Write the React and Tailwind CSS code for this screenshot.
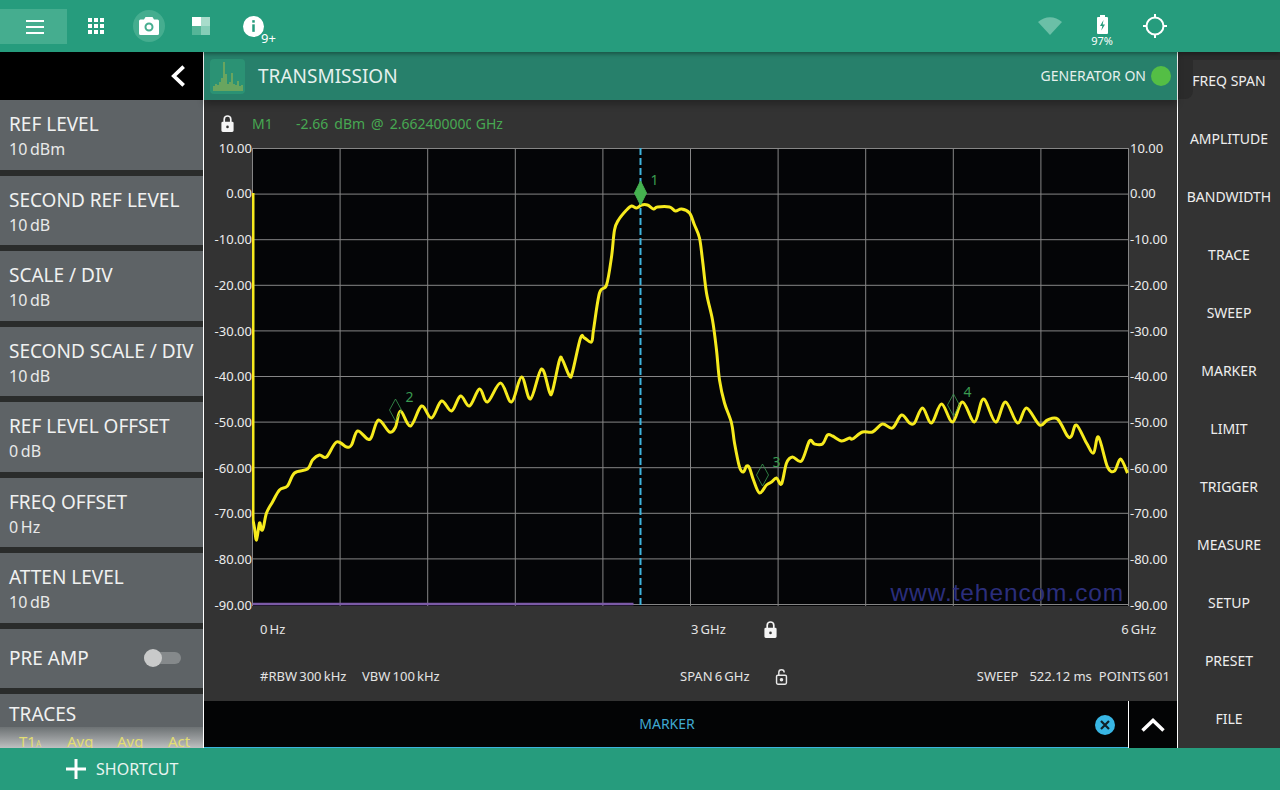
const levels = ["10.00", "0.00", "-10.00", "-20.00", "-30.00", "-40.00", "-50.00", "-60.00", "-70.00", "-80.00", "-90.00"];

const leftItems = [
  ["REF LEVEL", "10\u2009dBm"],
  ["SECOND REF LEVEL", "10\u2009dB"],
  ["SCALE / DIV", "10\u2009dB"],
  ["SECOND SCALE / DIV", "10\u2009dB"],
  ["REF LEVEL OFFSET", "0\u2009dB"],
  ["FREQ OFFSET", "0\u2009Hz"],
  ["ATTEN LEVEL", "10\u2009dB"],
];

const rightItems = ["FREQ SPAN", "AMPLITUDE", "BANDWIDTH", "TRACE", "SWEEP", "MARKER", "LIMIT", "TRIGGER", "MEASURE", "SETUP", "PRESET", "FILE"];

// trace read off the picture, in page pixels
const trace = [
  [253.5, 520], [255, 528], [257, 540], [260, 523], [262, 530], [264, 527], [267, 513], [273, 502], [280, 490], [288, 486], [295, 473],
  [308, 469], [313, 460], [320, 455], [327, 457], [337, 442], [347, 447], [352, 445], [358, 431], [368, 439], [372, 437], [379, 420], [390, 432],
  [396, 427], [401, 411], [411, 426], [422, 406], [432, 418], [442, 401], [452, 411], [461, 396], [470, 406], [480, 389], [488, 402], [501, 383],
  [512, 402], [522, 377], [531, 399], [542, 369], [550, 392], [553, 391], [560, 360], [563, 360], [570, 376], [573, 372], [581, 338], [585, 338],
  [592, 342], [594, 330], [600, 293], [607, 285], [612, 257], [615, 230], [619, 220], [627, 210], [632, 206], [637, 208], [642, 205], [648, 205],
  [654, 209], [658, 207], [670, 207], [676, 211], [682, 209], [690, 213], [695, 225], [700, 238], [703, 260], [707, 293], [713, 320], [717, 350],
  [720, 380], [725, 403], [732, 423], [735, 443], [740, 467], [744, 472], [747, 466], [750, 468], [754, 480], [760, 493], [767, 485], [772, 482],
  [777, 478], [782, 484], [787, 463], [793, 457], [802, 461], [810, 441], [815, 444], [823, 444], [828, 435], [833, 436], [842, 441], [850, 438],
  [853, 439], [863, 432], [873, 432], [883, 424], [893, 428], [902, 415], [910, 423], [915, 423], [923, 408], [932, 423], [942, 404], [953, 422],
  [963, 402], [975, 422], [984, 399], [996, 422], [1006, 402], [1018, 423], [1027, 408], [1040, 425], [1048, 420], [1058, 419], [1068, 436],
  [1072, 436], [1077, 425], [1087, 443], [1094, 453], [1099, 437], [1108, 467], [1115, 471], [1121, 459], [1128, 473],
];

// catmull-rom through the points so the ripple has round tops
function tracePath(pts) {
  let d = `M253.5 193L${pts[0][0]} ${pts[0][1]}`;
  for (let i = 0; i < pts.length - 1; i++) {
    const p0 = pts[i - 1] || pts[i];
    const p1 = pts[i];
    const p2 = pts[i + 1];
    const p3 = pts[i + 2] || p2;
    const c1x = p1[0] + (p2[0] - p0[0]) / 6;
    const c1y = p1[1] + (p2[1] - p0[1]) / 6;
    const c2x = p2[0] - (p3[0] - p1[0]) / 6;
    const c2y = p2[1] - (p3[1] - p1[1]) / 6;
    d += `C${c1x} ${c1y} ${c2x} ${c2y} ${p2[0]} ${p2[1]}`;
  }
  return d;
}

const markers = [
  { n: "1", x: 641, y: 193, h: 12, solid: true, lx: 655, ly: 185 },
  { n: "2", x: 396, y: 410, h: 11, lx: 410, ly: 402 },
  { n: "3", x: 763, y: 475, h: 11, lx: 777, ly: 467 },
  { n: "4", x: 954, y: 405, h: 11, lx: 968, ly: 397 },
];

function Lock({ open, className }) {
  if (open) {
    return (
      <svg viewBox="0 0 16 20" className={className} fill="none" stroke="#e8e8e8" strokeWidth="1.6">
        <path d="M5 8V5a3 3 0 0 1 6 0" />
        <rect x="2.5" y="8" width="11" height="10" rx="1.5" />
        <circle cx="8" cy="13" r="1.2" fill="#e8e8e8" />
      </svg>
    );
  }
  return (
    <svg viewBox="0 0 16 20" className={className}>
      <path d="M4.5 9V5.5a3.5 3.5 0 0 1 7 0V9" fill="none" stroke="#f5f5f5" strokeWidth="1.8" />
      <path fillRule="evenodd" fill="#f5f5f5" d="M3 8h10a1.5 1.5 0 0 1 1.5 1.5v8A1.5 1.5 0 0 1 13 19H3a1.5 1.5 0 0 1-1.5-1.5v-8A1.5 1.5 0 0 1 3 8Zm5 4.2a1.4 1.4 0 1 0 0 2.8 1.4 1.4 0 0 0 0-2.8Z" />
    </svg>
  );
}

function TopBar() {
  return (
    <div className="h-[52px] shrink-0 bg-[#269c7d] flex items-center relative z-20 shadow-[0_2px_4px_rgba(0,0,0,0.35)]">
      <div className="mt-px w-[67px] h-[35px] bg-[#45ad8f] flex items-center justify-center pl-[2px]">
        <div className="w-[18px] flex flex-col gap-[4px]">
          <div className="h-[2px] bg-white" />
          <div className="h-[2px] bg-white" />
          <div className="h-[2px] bg-white" />
        </div>
      </div>
      <div className="ml-[21px] grid grid-cols-3 gap-[2px] w-[16px]">
        {Array.from({ length: 9 }).map((_, i) => (
          <div key={i} className="w-[4px] h-[4px] bg-white" />
        ))}
      </div>
      <div className="ml-[29px] w-[32px] h-[32px] rounded-full bg-[#45ad8f] flex items-center justify-center">
        <svg viewBox="0 0 20 18" className="w-[20px] h-[18px]">
          <path fillRule="evenodd" fill="#fff" d="M6.5 0h7L15 2.500h3.500A1.500 1.500 0 0 1 20 4v12.500a1.500 1.500 0 0 1-1.500 1.500h-17A1.500 1.500 0 0 1 0 16.500V4a1.500 1.500 0 0 1 1.500-1.500H5ZM10 5.500a4.500 4.500 0 1 0 0 9 4.500 4.500 0 0 0 0-9Zm0 2a2.500 2.500 0 1 1 0 5 2.500 2.500 0 0 1 0-5Z" />
        </svg>
      </div>
      <svg viewBox="0 0 18 18" className="ml-[27px] w-[18px] h-[18px]">
        <rect x="0" y="0" width="9" height="9" fill="#fff" />
        <rect x="9" y="0" width="9" height="9" fill="#a8dccb" />
        <rect x="0" y="9" width="9" height="9" fill="#55b598" />
        <rect x="9" y="9" width="9" height="9" fill="#85cdb7" />
      </svg>
      <div className="ml-[33px] relative w-[21px] h-[21px] rounded-full bg-white flex items-center justify-center">
        <svg viewBox="0 0 6 14" className="w-[5px] h-[12px]" fill="#269c7d">
          <rect x="1.500" y="0" width="3" height="3" />
          <rect x="1.500" y="5" width="3" height="9" />
        </svg>
        <span className="absolute left-[18px] top-[14px] text-[13px] leading-[16px] text-white">9+</span>
      </div>
      <div className="ml-auto w-[24px] h-[18px]">
        <svg viewBox="0 0 24 18" className="w-[24px] h-[18px]">
          <path d="M0 5C7-1.500 17-1.500 24 5L12 18Z" fill="#6bbfa7" />
        </svg>
      </div>
      <div className="ml-[25px] w-[30px] flex flex-col items-center relative top-[5px]">
        <svg viewBox="0 0 11 19" className="w-[11px] h-[19px]">
          <path fillRule="evenodd" fill="#fff" d="M3 0h5v2h2a1 1 0 0 1 1 1v15a1 1 0 0 1-1 1H1a1 1 0 0 1-1-1V3a1 1 0 0 1 1-1h2Zm3.500 5L3 11h2.300l-1 4.500L8 9.500H5.700Z" />
        </svg>
        <span className="mt-px text-[11px] leading-[12px] text-white">97%</span>
      </div>
      <svg viewBox="0 0 24 24" className="ml-[26px] mr-[113px] w-[24px] h-[24px]" fill="none" stroke="#fff" strokeWidth="2">
        <circle cx="12" cy="12" r="8.500" />
        <path d="M12 0v4M12 20v4M0 12h4M20 12h4" />
      </svg>
    </div>
  );
}

function LeftPanel() {
  return (
    <div className="w-[203px] shrink-0 flex flex-col bg-[#2a2c2b] overflow-hidden">
      <div className="h-[48px] shrink-0 bg-black flex items-center justify-end pr-[17px]">
        <svg viewBox="0 0 16 24" className="w-[15px] h-[24px]" fill="none" stroke="#fff" strokeWidth="4">
          <path d="M13.500 2L3 12l10.500 10" />
        </svg>
      </div>
      <div className="flex flex-col gap-[6px]">
        {leftItems.map(([title, value]) => (
          <div key={title} className="h-[69.5px] shrink-0 bg-[#5e6366] pl-[9px] pt-[12px] text-[#f0f1f1] whitespace-nowrap">
            <div className="text-[19px] leading-[24px]">{title}</div>
            <div className="text-[16px] leading-[26px] text-[#e8e9e9]">{value}</div>
          </div>
        ))}
        <div className="h-[59px] shrink-0 bg-[#5e6366] pl-[9px] pr-[22px] flex items-center justify-between text-[#f0f1f1]">
          <div className="text-[19px]">PRE AMP</div>
          <div className="relative w-[37px] h-[12px] rounded-full bg-[#85898b]">
            <div className="absolute left-0 -top-[3px] w-[18px] h-[18px] rounded-full bg-[#c9caca]" />
          </div>
        </div>
        <div className="h-[60px] shrink-0 bg-[#5e6366] text-[#f0f1f1]">
          <div className="pl-[9px] pt-[8px] h-[33px] text-[19px] leading-[25px]">TRACES</div>
          <div className="h-[30px] bg-gradient-to-b from-[#6d7274] via-[#a5a8a9] to-[#e5e6e6] flex pl-[19px] pt-[3px] text-[15px] text-[#e2dd73]">
            <span className="w-[48px]">T1<span className="text-[8px]">A</span></span>
            <span className="w-[50px]">Avg</span>
            <span className="w-[51px]">Avg</span>
            <span>Act</span>
          </div>
        </div>
      </div>
    </div>
  );
}

function Chart() {
  const xs = Array.from({ length: 11 }).map((_, i) => 253 + i * 87.6);
  const ys = Array.from({ length: 11 }).map((_, i) => 148.5 + i * 45.6);
  return (
    <svg viewBox="252.500 148 877 458" className="w-[877px] h-[458px] shrink-0 bg-[#040507]">
      {xs.map((x) => (
        <line key={x} x1={x} x2={x} y1="148" y2="606" stroke="#868686" strokeWidth="1" />
      ))}
      {ys.map((y) => (
        <line key={y} x1="253" x2="1129" y1={y} y2={y} stroke="#868686" strokeWidth="1" />
      ))}
      <line x1="253" x2="634" y1="604" y2="604" stroke="#7b5aa6" strokeWidth="2.500" />
      <text x="891" y="601" fontFamily="Liberation Sans, sans-serif" fontSize="24.500" fill="#2b2e7c" letterSpacing="0.900">www.tehencom.com</text>
      <line x1="641" x2="641" y1="148" y2="606" stroke="#3fb4dd" strokeWidth="2" strokeDasharray="7 3" />
      <path d={tracePath(trace)} fill="none" stroke="#f6ea1d" strokeWidth="3" strokeLinejoin="round" />
      {markers.map((m) => (
        <g key={m.n}>
          <path
            d={`M${m.x} ${m.y - m.h}L${m.x + 6} ${m.y}L${m.x} ${m.y + m.h}L${m.x - 6} ${m.y}Z`}
            fill={m.solid ? "#45b24f" : "none"}
            stroke={m.solid ? "#45b24f" : "#3a9a50"}
            strokeWidth={m.solid ? 1 : 0.8}
          />
          <text x={m.lx} y={m.ly} fontFamily="Noto Sans, sans-serif" fontSize="14" fill="#3a9a50" textAnchor="middle">{m.n}</text>
        </g>
      ))}
    </svg>
  );
}

function LevelScale({ align }) {
  return (
    <div className={`h-[457px] mt-[0.5px] flex flex-col justify-between text-[13px] text-[#ececec] ${align}`}>
      {levels.map((l, i) => (
        <div key={i} className="h-0 flex items-center">{l}</div>
      ))}
    </div>
  );
}

function Center() {
  return (
    <div className="flex-1 min-w-0 bg-[#333333] flex flex-col border-x border-white">
      <div className="h-[48px] shrink-0 bg-[#27806b] flex items-center pl-[6px] pr-[6px] relative z-10 shadow-[0_5px_6px_rgba(0,0,0,0.25)]">
        <div className="w-[35px] h-[35px] rounded-[4px] bg-[#2b9274] overflow-hidden">
          <svg viewBox="0 0 35 35" className="w-[35px] h-[35px]" stroke="#a8b84a" strokeWidth="1">
            <path d="M4 32v-5M6 32v-7M8 32v-6M10 32v-9M12 32v-13M14 32V3M16 32V15M18 32v-7M20 32v-9M22 32V14M24 32v-7M26 32v-6M28 32v-10M30 32v-5M32 32v-6" />
          </svg>
        </div>
        <div className="ml-[13px] mt-[1px] text-[19px] text-[#e6f0ed]">TRANSMISSION</div>
        <div className="ml-auto -mt-[1px] text-[14px] text-[#e6f0ed]">GENERATOR ON</div>
        <div className="ml-[5px] w-[20px] h-[20px] rounded-full bg-[#54be45]" />
      </div>
      <div className="h-[48px] shrink-0 flex items-center pl-[16px] pb-[1px] text-[14px] text-[#47a852]">
        <Lock className="w-[15px] h-[19px]" />
        <span className="ml-[17px] w-[44px]">M1</span>
        <span>-2.66</span>
        <span className="ml-[6px]">dBm</span>
        <span className="ml-[6px]">@</span>
        <span className="ml-[6px] w-[81px] overflow-hidden whitespace-nowrap">2.662400000</span>
        <span className="ml-[5px]">GHz</span>
      </div>
      <div className="flex shrink-0 h-[458px]">
        <div className="w-[48px] shrink-0 flex justify-end">
          <LevelScale align="items-end" />
        </div>
        <Chart />
        <div className="flex-1 pl-[1px]">
          <LevelScale align="items-start" />
        </div>
      </div>
      <div className="h-[47px] shrink-0 flex items-center pl-[56px] pr-[21px] text-[13px] text-[#e4e4e4]">
        <span className="w-[431px]">0{"\u2009"}Hz</span>
        <span className="w-[72px]">3{"\u2009"}GHz</span>
        <Lock className="w-[15px] h-[19px]" />
        <span className="ml-auto">6{"\u2009"}GHz</span>
      </div>
      <div className="h-[48px] shrink-0 flex items-center pl-[56px] pr-[7px] pb-[1px] text-[13px] text-[#e4e4e4]">
        <span className="w-[102px]">#RBW{"\u2009"}300{"\u2009"}kHz</span>
        <span className="w-[318px]">VBW{"\u2009"}100{"\u2009"}kHz</span>
        <span className="w-[94px]">SPAN{"\u2009"}6{"\u2009"}GHz</span>
        <Lock open className="w-[15px] h-[18px]" />
        <span className="ml-auto">SWEEP</span>
        <span className="ml-[11px]">522.12 ms</span>
        <span className="ml-[7px]">POINTS{"\u2009"}601</span>
      </div>
      <div className="h-[48px] shrink-0 bg-[#030405] flex">
        <div className="flex-1 border-b-[2px] border-[#3cb4dc] flex items-center justify-center relative">
          <span className="pl-[2px] pb-[2px] text-[14px] text-[#3fa9d0]">MARKER</span>
          <div className="absolute right-[13px] top-[14px] w-[20px] h-[20px] rounded-full bg-[#38b6e4] flex items-center justify-center">
            <svg viewBox="0 0 10 10" className="w-[10px] h-[10px]" fill="none" stroke="#102028" strokeWidth="2.200">
              <path d="M1 1l8 8M9 1l-8 8" />
            </svg>
          </div>
        </div>
        <div className="w-[49px] shrink-0 border-l border-white flex items-center justify-center">
          <svg viewBox="0 0 24 14" className="w-[24px] h-[14px]" fill="none" stroke="#fff" strokeWidth="3.500">
            <path d="M1.500 12.500L12 2.500l10.500 10" />
          </svg>
        </div>
      </div>
    </div>
  );
}

function RightPanel() {
  return (
    <div className="w-[102px] shrink-0 bg-[#333333] flex flex-col relative">
      {/* shadow round the selected tab */}
      <div className="absolute left-0 top-0 w-full h-[8px] bg-[#2b2b2b]" />
      <div className="absolute left-0 top-0 w-[15px] h-[47px] rounded-br-[8px] bg-[#2b2b2b]" />
      <div className="flex flex-col -mt-[1px] relative">
        {rightItems.map((item) => (
          <div key={item} className="h-[58px] shrink-0 flex items-center justify-center text-[14px] text-[#eeeeee]">
            {item}
          </div>
        ))}
      </div>
    </div>
  );
}

export default function App() {
  return (
    <div className="w-[1280px] h-[790px] overflow-hidden flex flex-col bg-[#333333] font-['Noto_Sans',sans-serif]">
      <TopBar />
      <div className="h-[696px] shrink-0 flex overflow-hidden">
        <LeftPanel />
        <Center />
        <RightPanel />
      </div>
      <div className="h-[42px] shrink-0 bg-[#269c7d] flex items-center pl-[66px]">
        <svg viewBox="0 0 20 20" className="w-[20px] h-[20px]" fill="none" stroke="#fff" strokeWidth="3">
          <path d="M10 0v20M0 10h20" />
        </svg>
        <span className="ml-[10px] text-[16px] text-[#e8f4f0]">SHORTCUT</span>
      </div>
    </div>
  );
}
